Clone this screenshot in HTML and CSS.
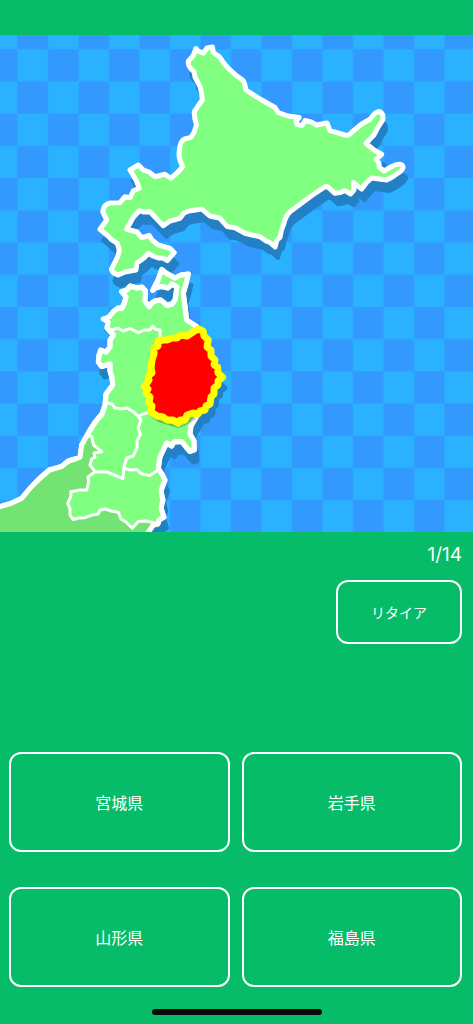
FILE: index.html
```html
<!DOCTYPE html>
<html lang="ja">
<head>
<meta charset="utf-8">
<meta name="viewport" content="width=device-width, initial-scale=1">
<title>都道府県クイズ</title>
<link rel="stylesheet" href="styles.css">
</head>
<body>
<main class="quiz">
  <svg class="map" viewBox="0 35 473 497" role="img" aria-label="日本地図">
    <defs>
      <pattern id="checker" x="17.5" y="49.3" width="61" height="64.4" patternUnits="userSpaceOnUse">
        <rect class="sea-light" width="61" height="64.4"/>
        <rect class="sea-dark" x="30.5" width="30.5" height="32.2"/>
        <rect class="sea-dark" y="32.2" width="30.5" height="32.2"/>
      </pattern>
      <path id="hokkaido" d="M195 51 L196 48.5 198 51 203.3 53.3 207 48 212.5 47 213.3 52.7 219.3 56.7 Q224 64 228.3 68.3 Q236 76 243.3 80.7 Q245 84 246 90 L260 99 275 107.500 278.300 112.700 288 116 299.300 117.500 L296 121 297 124.500 302 125.500 305 120.500 311 122 316.700 125 327 123 330 130.700 345 135 Q349 136 352 132 L361.700 124 370 119.300 Q375 112 379 111.500 Q384 113 382.700 120 L377.300 128.300 374 135 366 143.300 374 150 381.700 154.300 376 159.300 379 163 379.300 167.300 384 171 391 167 Q398 163 402 165 Q405 168 399 172.500 L392 177.300 386.700 180 371.700 178 Q366 182 361.700 189 L353.300 182.500 354 190 350.700 194 345 190.700 Q340 193 335 193.300 L328.300 187.300 Q326 186 324 187.300 L313.300 194.500 290 211.700 Q285 217 284 223.300 Q281 230 280 237.300 L277 240 275 247 270 242.500 266 241 260 236.700 252 235 245 233.300 235 227.700 227 226.500 220 218.300 210 216 Q205 212 201.700 209 L189 211 184 213 180 218.300 170 221 163.300 225.700 150 211.700 144 212 139.300 210.700 133.300 217.300 126.700 229.300 136.700 231.700 141.700 237.700 149.300 235.500 152 240 158.300 245 170 248.300 174.300 252.700 167.300 260.700 163 258 158.300 258 153 256 148.300 253.300 144 258 137 263 136 270 125 272 118.300 275 Q109 272 112.500 267 L118 256 119.300 250 117.300 243.300 112 240 108 236 100 229.300 106.700 220 102.700 211.700 Q104 204 110 203 L120 202.700 125 196.700 130 197.700 133.300 190.700 139.300 188.300 136 180 130 170 135 167 138.300 165 143.300 170 149 172 155 176.700 165 174.300 170.700 178.300 177 173 182.700 166.700 Q178 158 179.300 151 Q180 141 184.500 139 L191 137.300 Q195 132 196.500 125 Q194 118 194.300 111.700 L198 106 202.300 100 Q202 93 200 86.700 L195 77 194 71.700 Q187 66 188.500 61 L193 56 Z"/>
      <path id="honshu" d="M161.700 269.500 L158 280 152.700 290.500 156 287.500 161.700 286.500 168 288 172 284 177 287 175 300 172 304 167 305.500 161 300 156 300.500 151.700 303 149.300 306.700 145 301 145.500 291 142 287 137 288 130 286 127 290 121.700 291.700 126 297 124 304 121.700 308.300 118 308 113.300 311.500 109 317 103.300 319 108 322 107 328 113.300 335 110 340 110 347 106 352 100.700 350 99 355 98.300 362 101.700 366.500 110 364 110 371 111.700 376.700 112.700 385 106 394 105 405 102 414 96 421 90 430 81.700 445 80 457 75 459 68.300 461 61.700 466.500 49.300 470 39 479 30 488.300 21.700 498.300 12 503 -6 508.500 -6 545 140 545 149 531 153.300 525 158 524 159 520 164 517 161 508 163 500 161 491 165 480 162 474 158.300 468.300 160 457 166.700 443 171.700 446 174 442 181.700 441.500 186 447 190 451.500 194.300 450 194 441 190 434 191 426 198 414 210 395 210 350 196.700 326.700 186.700 320 185 306 183.300 293.300 186 284 188.300 274 181 275 175 278 166 273 Z"/>
      <path id="iwate" d="M198.300 329 L203 331 204 336 208.300 340 207 347 211 350 211 356 215 360 214 365 217.500 367 218 373 222.500 377.300 218 381 218 385 214 388 214 394 211 397 210 404 206 406 205 410 200 411 198 414 193 413 187 415 185 420 180 420 178 423 173 420 167 420 163 417 157 416 151 412 152 406 149 403 150 397 146 393 148 389 144.500 386.500 149 380 148 376 152 373 151 368 152 360 154 354 154 348 158 346 158 341 163 340 167 340 172 338 177 338 181 335 187 336 193 332 Z"/>
    </defs>
    <rect x="0" y="35" width="473" height="497" fill="url(#checker)"/>
    <g class="sea-shadow" transform="translate(3 11)">
      <use href="#hokkaido"/>
      <use href="#honshu"/>
      <use href="#iwate"/>
    </g>
    <use class="land" href="#hokkaido"/>
    <use class="land" href="#honshu"/>
    <path class="land-dim" d="M84 440 L91.700 436.700 93.300 445 101.700 451.700 91.700 458 90 465 95 471.700 87.300 480 86.700 490 70.700 491.700 67.700 503.300 71 518.300 85 517.700 98.300 514 105 509 118.300 512.300 125 521.700 132.300 528.300 138.300 521.700 153 523 148 534 0 534 0 509 21.700 501 31 490 50 473 69 464 82 459 Z"/>
    <use class="coast" href="#honshu"/>
    <g class="border">
      <path d="M107 328 L112 330 118 328 123 331 130 328.500 138.300 332.700 144 330 150 330 152.700 326 155 329 160 330 160 345"/>
      <path d="M106 402.500 L112 404 115 408 121.700 409 127 408 133.300 411.700 138.300 416.500 143 414 150 412"/>
      <path d="M138.300 416.500 L141 420 138 428 140.500 434 137 441 137.300 447 133.300 456 126.700 458 124 467 123 478.500 114 475 106.700 472 101 472 95 471.700"/>
      <path d="M86 435 L91.700 436.500 93.500 445 101.700 451.700 94 453 95 457 91.700 459 90 465 95 471.700 88 477 88.500 482 86.700 490 80 490 70.700 491.700 71 496 67.700 503.300 70 509 70 515 73 519.500 79 518 85 517.700 92 515 98.300 514 100 510 105 509 111 511 118.300 512.300 121 519 126 522 132.300 528.300 138.300 521.500 146 521 155 523"/>
      <path d="M123 468 L130 470 136.700 469.500 142 474 150 475.500 158.300 470"/>
    </g>
    <path class="target-shadow" d="M150 412 L157 418 167 423 173 424 178 427 185 424 188 418 193 416 196 419 189 423 184 426 178 428 168 425 158 422 151 417 Z"/>
    <use class="target" href="#iwate"/>
  </svg>

  <section class="status">
    <p class="count">1/14</p>
    <button class="button retire" type="button">リタイア</button>
  </section>

  <section class="answers" aria-label="回答">
    <button class="button" type="button">宮城県</button>
    <button class="button" type="button">岩手県</button>
    <button class="button" type="button">山形県</button>
    <button class="button" type="button">福島県</button>
  </section>
  <div class="home-bar"></div>
</main>
</body>
</html>
```
FILE: styles.css
```css
* {
  box-sizing: border-box;
}

body {
  margin: 0;
  background: #06bc68;
  color: #fff;
  font-family: Inter, "Noto Sans CJK JP", sans-serif;
}

.quiz {
  display: flex;
  flex-direction: column;
  min-height: 100vh;
  padding-top: 35px;
}

.map {
  display: block;
  width: 100%;
  height: auto;
}

.sea-light {
  fill: #2ab1ff;
}

.sea-dark {
  fill: #3399ff;
}

.sea-shadow {
  fill: #2380c4;
  stroke: #2380c4;
  stroke-width: 4;
  stroke-linejoin: round;
}

.target-shadow {
  fill: #000;
  opacity: 0.25;
}

.land,
.coast {
  fill: #80ff80;
  stroke: #fff;
  stroke-width: 5;
  stroke-linejoin: round;
}

.coast {
  fill: none;
}

.land-dim {
  fill: #73e373;
}

.border {
  fill: none;
  stroke: #fff;
  stroke-width: 3;
  stroke-linejoin: round;
}

.target {
  fill: #f00;
  stroke: #ff0;
  stroke-width: 7;
  stroke-linejoin: round;
}

.status {
  display: flex;
  flex-direction: column;
  align-items: flex-end;
  gap: 13px;
  padding: 11px 11px 24px;
}

.count {
  margin: 0;
  font-size: 19px;
  line-height: 24px;
}

.button {
  border: 2px solid #fff;
  border-radius: 12px;
  background: transparent;
  color: inherit;
  font-family: "Noto Sans CJK JP", sans-serif;
  font-size: 16px;
  font-weight: 400;
}

.retire {
  width: 126px;
  height: 64px;
  font-size: 14px;
}

.answers {
  display: grid;
  grid-template-columns: 1fr 1fr;
  grid-auto-rows: 100px;
  gap: 35px 12px;
  margin-top: auto;
  padding: 0 11px 22px 9px;
}

.home-bar {
  align-self: center;
  width: 170px;
  height: 6px;
  margin-bottom: 9px;
  border-radius: 3px;
  background: #0a0a0a;
}
```
